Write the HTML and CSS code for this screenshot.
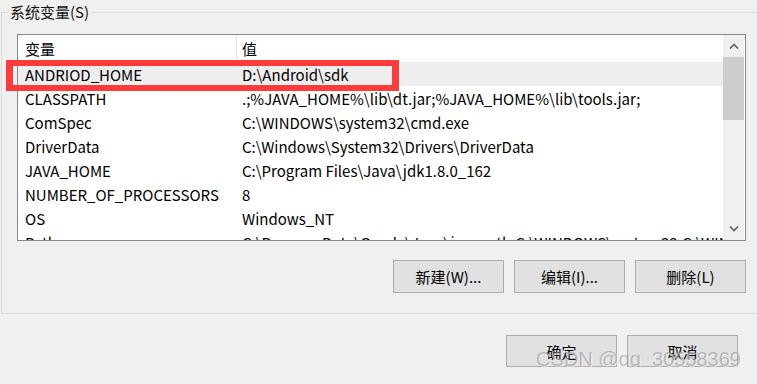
FILE: index.html
```html
<!DOCTYPE html>
<html lang="zh-CN">
<head>
    <meta charset="UTF-8">
    <title>系统变量</title>
    <link rel="stylesheet" href="styles.css">
</head>
<body>
    <fieldset class="group">
        <legend>系统变量(S)</legend>

        <div class="list-box">
            <div class="list">
                <div class="row head">
                    <div class="cell name">变量</div>
                    <div class="cell value">值</div>
                </div>
                <div class="row selected">
                    <div class="cell name">ANDRIOD_HOME</div>
                    <div class="cell value">D:\Android\sdk</div>
                </div>
                <div class="row">
                    <div class="cell name">CLASSPATH</div>
                    <div class="cell value">.;%JAVA_HOME%\lib\dt.jar;%JAVA_HOME%\lib\tools.jar;</div>
                </div>
                <div class="row">
                    <div class="cell name">ComSpec</div>
                    <div class="cell value">C:\WINDOWS\system32\cmd.exe</div>
                </div>
                <div class="row">
                    <div class="cell name">DriverData</div>
                    <div class="cell value">C:\Windows\System32\Drivers\DriverData</div>
                </div>
                <div class="row">
                    <div class="cell name">JAVA_HOME</div>
                    <div class="cell value">C:\Program Files\Java\jdk1.8.0_162</div>
                </div>
                <div class="row">
                    <div class="cell name">NUMBER_OF_PROCESSORS</div>
                    <div class="cell value">8</div>
                </div>
                <div class="row">
                    <div class="cell name">OS</div>
                    <div class="cell value">Windows_NT</div>
                </div>
                <div class="row">
                    <div class="cell name">Path</div>
                    <div class="cell value">C:\ProgramData\Oracle\Java\javapath;C:\WINDOWS\system32;C:\WINDOWS</div>
                </div>
            </div>

            <div class="scrollbar">
                <div class="arrow">
                    <svg width="10" height="6" viewBox="0 0 10 6"><path d="M1 5.5 L5 1.5 L9 5.5" fill="none" stroke="#606060" stroke-width="1.6"/></svg>
                </div>
                <div class="thumb"></div>
                <div class="track"></div>
                <div class="arrow">
                    <svg width="10" height="6" viewBox="0 0 10 6"><path d="M1 0.5 L5 4.5 L9 0.5" fill="none" stroke="#606060" stroke-width="1.6"/></svg>
                </div>
            </div>

            <!-- marca roja sobre la fila seleccionada -->
            <div class="mark"></div>
        </div>

        <div class="actions">
            <button class="btn">新建(W)...</button>
            <button class="btn">编辑(I)...</button>
            <button class="btn">删除(L)</button>
        </div>
    </fieldset>

    <div class="footer">
        <button class="btn">确定</button>
        <button class="btn">取消</button>
        <span class="watermark">CSDN @qq_30558369</span>
    </div>
</body>
</html>
```

FILE: styles.css
```css
* {
    box-sizing: border-box;
}

body {
    margin: 0;
    background: #f0f0f0;
    color: #000;
    font-family: "Noto Sans CJK SC", "Noto Sans", sans-serif;
    font-size: 15px;
    overflow: hidden;
}

.group {
    margin: 2px -10px 0 1px;
    padding: 12px 25px 20px 15px;
    border: 1px solid #dcdcdc;
    min-width: 0;
}

.group legend {
    margin-left: -9px;
    padding: 0 2px;
    line-height: 20px;
    color: #111;
}

.list-box {
    position: relative;
    display: flex;
    width: 729px;
    height: 207px;
    border: 1px solid #828790;
    background: #fff;
}

.list {
    width: 705px;
    overflow: hidden;
}

.row {
    display: flex;
    height: 24px;
    align-items: center;
    white-space: nowrap;
}

.row.head {
    height: 27px;
}

.row.selected {
    background: #eeeeee;
}

.cell.name {
    width: 218px;
    padding-left: 7px;
    flex-shrink: 0;
}

.cell.value {
    padding-left: 6px;
}

.row.head .cell.value {
    border-left: 1px solid #e5e5e5;
    height: 100%;
    display: flex;
    align-items: center;
    padding-left: 5px;
}

.mark {
    position: absolute;
    left: -12px;
    top: 25px;
    width: 393px;
    height: 31px;
    border: 6px solid #ff3b3b;
    border-left-width: 7px;
    border-right-width: 7px;
    pointer-events: none;
}

.scrollbar {
    width: 21px;
    margin-right: 1px;
    background: #f0f0f0;
    display: flex;
    flex-direction: column;
}

.scrollbar .arrow {
    height: 22px;
    display: flex;
    align-items: center;
    justify-content: center;
}

.scrollbar .thumb {
    height: 63px;
    background: #cdcdcd;
}

.scrollbar .track {
    flex: 1;
}

.actions {
    display: flex;
    justify-content: flex-end;
    gap: 10px;
    margin-top: 19px;
    width: 729px;
}

.btn {
    width: 111px;
    height: 33px;
    background: #e1e1e1;
    border: 1px solid #adadad;
    font-family: inherit;
    font-size: 15px;
    color: #000;
    padding: 0;
}

.footer {
    position: relative;
    display: flex;
    justify-content: flex-end;
    gap: 10px;
    margin-top: 21px;
    padding-right: 19px;
}

.footer .btn {
    height: 32px;
}

.watermark {
    position: absolute;
    right: 16px;
    top: 13px;
    font-family: "Liberation Sans", sans-serif;
    font-size: 20px;
    color: rgba(150, 150, 150, 0.6);
    text-shadow: 1px 1px 0 rgba(255, 255, 255, 0.5);
    pointer-events: none;
}
```
